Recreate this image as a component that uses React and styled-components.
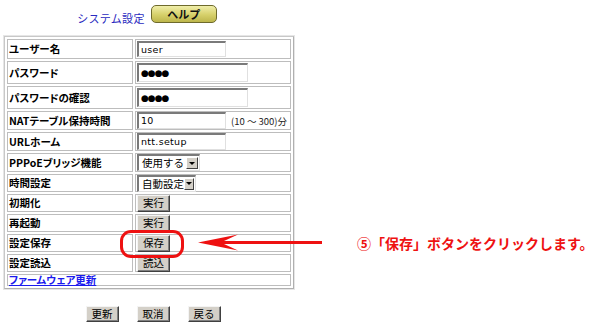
import React from 'react';
import styled, { createGlobalStyle } from 'styled-components';

const GlobalStyle = createGlobalStyle`
  html, body {
    margin: 0;
    padding: 0;
    background: #ffffff;
  }
  body {
    font-family: "Noto Sans CJK JP", "DejaVu Sans", sans-serif;
  }
`;

const Page = styled.div`
  position: relative;
  width: 600px;
  height: 328px;
  overflow: hidden;
  background: #fff;
`;

const Panel = styled.div`
  width: 290px;
  padding-left: 4px;
  display: flex;
  flex-direction: column;
`;

const Header = styled.div`
  display: flex;
  align-items: center;
  justify-content: center;
  gap: 6px;
  height: 18px;
  margin-top: 5px;
  padding-right: 4px;
`;

const Title = styled.span`
  color: #2a2ac0;
  font-size: 11px;
  letter-spacing: 0.3px;
  margin-top: 7px;
`;

const HelpButton = styled.button`
  width: 66px;
  height: 18px;
  padding: 0;
  border: 1px solid #6e6a2c;
  border-radius: 5px;
  background: linear-gradient(#f0eeaa, #d6d06a 55%, #bdb64c);
  font-family: "Noto Sans CJK JP", sans-serif;
  font-size: 11px;
  font-weight: 700;
  color: #111;
  line-height: 14px;
`;

const Table = styled.table`
  margin-top: 13px;
  width: 290px;
  border-collapse: separate;
  border-spacing: 2px;
  border: 1px solid #c8c8c8;
  border-right-color: #b0b0b0;
  border-bottom-color: #b0b0b0;
  outline: 1px solid #e6e6e6;
`;

const Cell = styled.td`
  width: ${({ wide }) => (wide ? 'auto' : '124px')};
  padding: 0;
  border: 1px solid #bdbdbd;
  vertical-align: middle;
  line-height: 0;
`;

const Inner = styled.div`
  display: flex;
  align-items: center;
  height: ${({ h }) => h}px;
  padding: 0 1px;
  white-space: nowrap;
`;

const Label = styled.span`
  font-size: 10.5px;
  font-weight: 700;
  line-height: 12px;
  color: #000;
  font-feature-settings: "palt";
`;

const Field = styled.div`
  display: flex;
  align-items: center;
  flex: none;
  box-sizing: border-box;
  width: ${({ w }) => w}px;
  height: ${({ h }) => h}px;
  padding-left: 2px;
  background: #fff;
  border-top: 2px solid #7a7a7a;
  border-left: 2px solid #7a7a7a;
  border-right: 1px solid #e0e0e0;
  border-bottom: 1px solid #e0e0e0;
  font-family: "DejaVu Sans", sans-serif;
  font-size: ${({ dots }) => (dots ? 9 : 9.5)}px;
  font-weight: ${({ dots }) => (dots ? 700 : 400)};
  letter-spacing: ${({ dots }) => (dots ? -1 : 0.3)}px;
  line-height: 12px;
  color: #000;
`;

const Note = styled.span`
  margin-left: 5px;
  font-size: 9.5px;
  line-height: 12px;
  color: #222;
`;

const Select = styled.div`
  display: flex;
  align-items: center;
  flex: none;
  box-sizing: border-box;
  width: ${({ w }) => w}px;
  height: 17px;
  background: #fff;
  border-top: 2px solid #7a7a7a;
  border-left: 2px solid #7a7a7a;
  border-right: 1px solid #e0e0e0;
  border-bottom: 1px solid #e0e0e0;
  font-size: 10.5px;
  line-height: 12px;
  color: #000;
`;

const SelectText = styled.span`
  flex: 1;
  padding-left: 3px;
`;

const SelectArrow = styled.span`
  width: 12px;
  height: 12px;
  margin-right: 1px;
  box-sizing: border-box;
  background: #d4d0c8;
  border: 1px solid;
  border-color: #fff #404040 #404040 #fff;
  display: flex;
  align-items: center;
  justify-content: center;
  &::after {
    content: "";
    border-left: 3px solid transparent;
    border-right: 3px solid transparent;
    border-top: 3px solid #000;
  }
`;

const Button = styled.button`
  flex: none;
  box-sizing: border-box;
  height: ${({ h }) => h || 17}px;
  padding: 0 5px;
  background: #d4d0c8;
  border: 1px solid;
  border-color: #f4f4f4 #404040 #404040 #f4f4f4;
  box-shadow: inset -1px -1px 0 #808080;
  font-family: "Noto Sans CJK JP", sans-serif;
  font-size: 10.5px;
  line-height: 12px;
  color: #000;
`;

const FirmwareLink = styled.a`
  color: #1a1aee;
  font-size: 10.5px;
  font-weight: 700;
  line-height: 12px;
  text-decoration: underline;
  font-feature-settings: "palt";
`;

const Footer = styled.div`
  display: flex;
  justify-content: center;
  gap: 18px;
  margin-top: 17px;
  padding-left: 8px;
`;

const Ring = styled.div`
  position: absolute;
  left: 120px;
  top: 230px;
  width: 64px;
  height: 28px;
  box-sizing: border-box;
  border: 3px solid #ee1111;
  border-radius: 11px;
`;

const Arrow = styled.svg`
  position: absolute;
  left: 196px;
  top: 233px;
`;

const Callout = styled.div`
  position: absolute;
  left: 357px;
  top: 233px;
  color: #ee1111;
  font-size: 14px;
  font-weight: 700;
  white-space: nowrap;
  line-height: 20px;
`;

const rows = [
  { label: 'ユーザー名', h: 18, field: { w: 89, h: 16, text: 'user' } },
  { label: 'パスワード', h: 21, field: { w: 111, h: 19, text: '●●●●', dots: true } },
  { label: 'パスワードの確認', h: 21, field: { w: 111, h: 19, text: '●●●●', dots: true } },
  { label: 'NATテーブル保持時間', h: 17, field: { w: 89, h: 17, text: '10' }, note: '(10 ～ 300)分' },
  { label: 'URLホーム', h: 17, field: { w: 89, h: 17, text: 'ntt.setup' } },
  { label: 'PPPoEブリッジ機能', h: 17, select: { w: 63, text: '使用する' } },
  { label: '時間設定', h: 16, select: { w: 59, text: '自動設定' } },
  { label: '初期化', h: 16, button: '実行' },
  { label: '再起動', h: 16, button: '実行' },
  { label: '設定保存', h: 16, button: '保存' },
  { label: '設定読込', h: 16, button: '読込' },
];

const App = () => (
  <Page>
    <GlobalStyle />
    <Panel>
      <Header>
        <Title>システム設定</Title>
        <HelpButton>ヘルプ</HelpButton>
      </Header>
      <Table>
        <tbody>
          {rows.map((r) => (
            <tr key={r.label}>
              <Cell>
                <Inner h={r.h}>
                  <Label>{r.label}</Label>
                </Inner>
              </Cell>
              <Cell wide>
                <Inner h={r.h}>
                  {r.field && (
                    <Field w={r.field.w} h={r.field.h} dots={r.field.dots}>
                      {r.field.text}
                    </Field>
                  )}
                  {r.note && <Note>{r.note}</Note>}
                  {r.select && (
                    <Select w={r.select.w}>
                      <SelectText>{r.select.text}</SelectText>
                      <SelectArrow />
                    </Select>
                  )}
                  {r.button && <Button>{r.button}</Button>}
                </Inner>
              </Cell>
            </tr>
          ))}
          <tr>
            <Cell wide colSpan={2}>
              <Inner h={10}>
                <FirmwareLink href="#">ファームウェア更新</FirmwareLink>
              </Inner>
            </Cell>
          </tr>
        </tbody>
      </Table>
      <Footer>
        <Button h={16}>更新</Button>
        <Button h={16}>取消</Button>
        <Button h={16}>戻る</Button>
      </Footer>
    </Panel>

    <Ring />
    <Arrow width="130" height="20" viewBox="0 0 130 20">
      <path d="M2 9.5 L42 1.5 L28 8 L126 8 L126 11 L28 11 L42 17.5 Z" fill="#ee1111" />
    </Arrow>
    <Callout>⑤「保存」ボタンをクリックします。</Callout>
  </Page>
);

export default App;
